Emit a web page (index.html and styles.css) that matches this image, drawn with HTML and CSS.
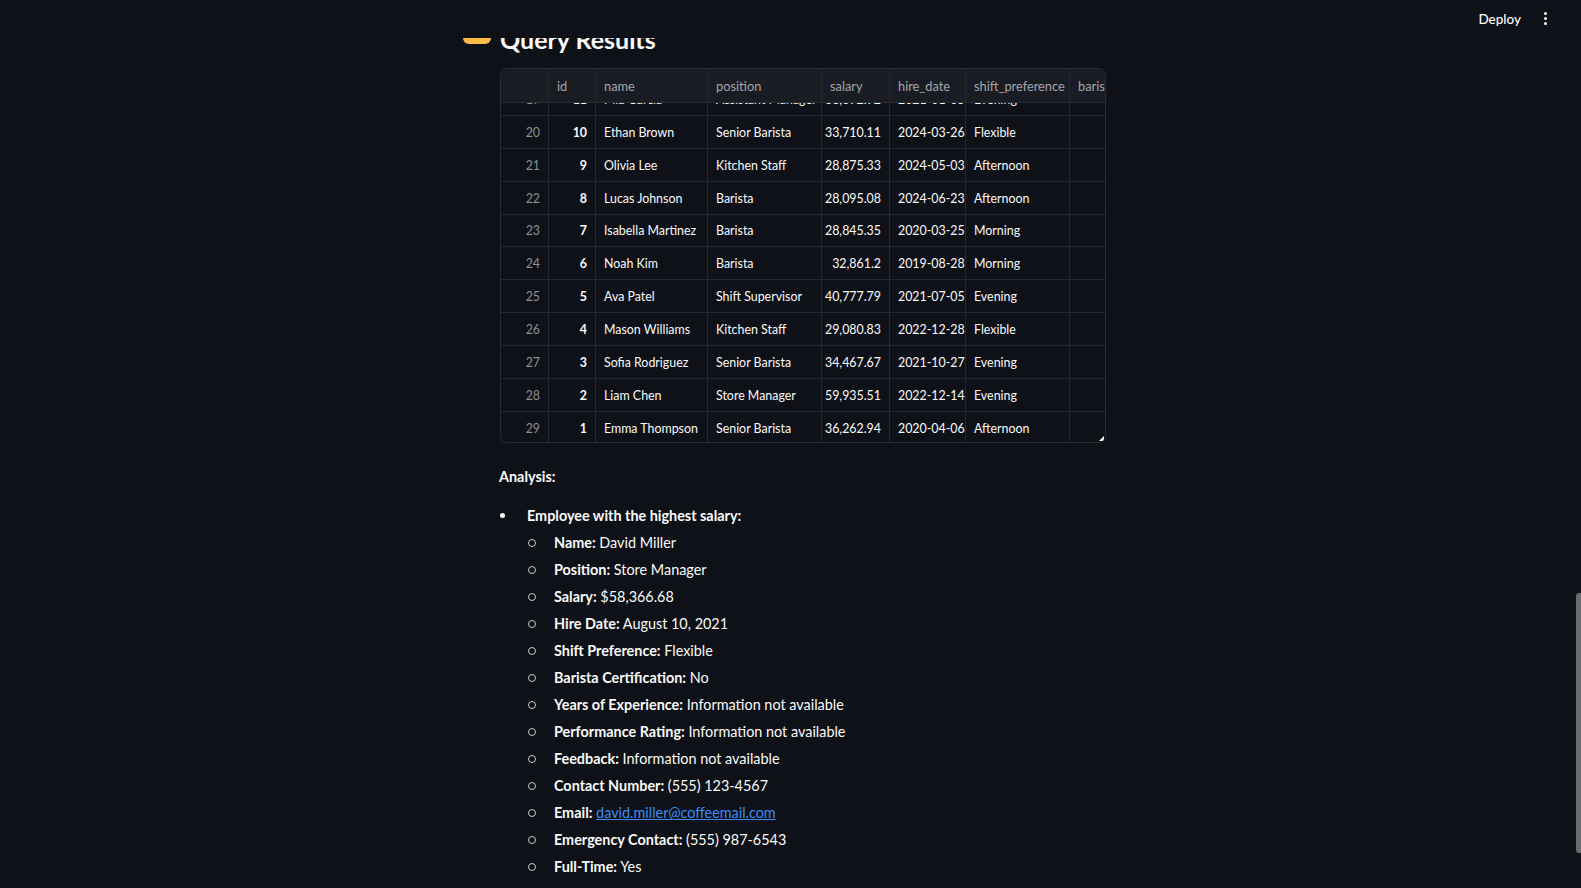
FILE: index.html
```html
<!DOCTYPE html>
<html lang="en">
<head>
<meta charset="utf-8">
<title>Query Results</title>
<link rel="stylesheet" href="styles.css">
</head>
<body>
<header class="topbar">
  <span class="deploy">Deploy</span>
  <span class="kebab"><i></i><i></i><i></i></span>
</header>

<main class="main">
  <section class="chat">
    <div class="avatar"></div>
    <div class="content">
      <h3 class="title">Query Results</h3>

      <div class="grid">
        <div class="row head">
          <div class="c idx"></div>
          <div class="c">id</div>
          <div class="c">name</div>
          <div class="c">position</div>
          <div class="c">salary</div>
          <div class="c">hire_date</div>
          <div class="c">shift_preference</div>
          <div class="c">barista_certification</div>
        </div>
        <div class="body">
          <div class="rows">
            <div class="row"><div class="c idx num">19</div><div class="c num b">11</div><div class="c">Mia Garcia</div><div class="c">Assistant Manager</div><div class="c num">38,092.92</div><div class="c">2021-01-05</div><div class="c">Evening</div><div class="c"></div></div>
            <div class="row"><div class="c idx num">20</div><div class="c num b">10</div><div class="c">Ethan Brown</div><div class="c">Senior Barista</div><div class="c num">33,710.11</div><div class="c">2024-03-26</div><div class="c">Flexible</div><div class="c"></div></div>
            <div class="row"><div class="c idx num">21</div><div class="c num b">9</div><div class="c">Olivia Lee</div><div class="c">Kitchen Staff</div><div class="c num">28,875.33</div><div class="c">2024-05-03</div><div class="c">Afternoon</div><div class="c"></div></div>
            <div class="row"><div class="c idx num">22</div><div class="c num b">8</div><div class="c">Lucas Johnson</div><div class="c">Barista</div><div class="c num">28,095.08</div><div class="c">2024-06-23</div><div class="c">Afternoon</div><div class="c"></div></div>
            <div class="row"><div class="c idx num">23</div><div class="c num b">7</div><div class="c">Isabella Martinez</div><div class="c">Barista</div><div class="c num">28,845.35</div><div class="c">2020-03-25</div><div class="c">Morning</div><div class="c"></div></div>
            <div class="row"><div class="c idx num">24</div><div class="c num b">6</div><div class="c">Noah Kim</div><div class="c">Barista</div><div class="c num">32,861.2</div><div class="c">2019-08-28</div><div class="c">Morning</div><div class="c"></div></div>
            <div class="row"><div class="c idx num">25</div><div class="c num b">5</div><div class="c">Ava Patel</div><div class="c">Shift Supervisor</div><div class="c num">40,777.79</div><div class="c">2021-07-05</div><div class="c">Evening</div><div class="c"></div></div>
            <div class="row"><div class="c idx num">26</div><div class="c num b">4</div><div class="c">Mason Williams</div><div class="c">Kitchen Staff</div><div class="c num">29,080.83</div><div class="c">2022-12-28</div><div class="c">Flexible</div><div class="c"></div></div>
            <div class="row"><div class="c idx num">27</div><div class="c num b">3</div><div class="c">Sofia Rodriguez</div><div class="c">Senior Barista</div><div class="c num">34,467.67</div><div class="c">2021-10-27</div><div class="c">Evening</div><div class="c"></div></div>
            <div class="row"><div class="c idx num">28</div><div class="c num b">2</div><div class="c">Liam Chen</div><div class="c">Store Manager</div><div class="c num">59,935.51</div><div class="c">2022-12-14</div><div class="c">Evening</div><div class="c"></div></div>
            <div class="row"><div class="c idx num">29</div><div class="c num b">1</div><div class="c">Emma Thompson</div><div class="c">Senior Barista</div><div class="c num">36,262.94</div><div class="c">2020-04-06</div><div class="c">Afternoon</div><div class="c"></div></div>
          </div>
        </div>
        <span class="resize"></span>
      </div>

      <p class="para"><strong>Analysis:</strong></p>
      <ul class="list">
        <li><strong>Employee with the highest salary:</strong>
          <ul class="sublist">
            <li><strong>Name:</strong> David Miller</li>
            <li><strong>Position:</strong> Store Manager</li>
            <li><strong>Salary:</strong> $58,366.68</li>
            <li><strong>Hire Date:</strong> August 10, 2021</li>
            <li><strong>Shift Preference:</strong> Flexible</li>
            <li><strong>Barista Certification:</strong> No</li>
            <li><strong>Years of Experience:</strong> Information not available</li>
            <li><strong>Performance Rating:</strong> Information not available</li>
            <li><strong>Feedback:</strong> Information not available</li>
            <li><strong>Contact Number:</strong> (555) 123-4567</li>
            <li><strong>Email:</strong> <a href="#">david.miller@coffeemail.com</a></li>
            <li><strong>Emergency Contact:</strong> (555) 987-6543</li>
            <li><strong>Full-Time:</strong> Yes</li>
          </ul>
        </li>
      </ul>
    </div>
  </section>
</main>

<div class="scrollthumb"></div>
</body>
</html>
```

FILE: styles.css
```css
* { box-sizing: border-box; }

html, body {
  margin: 0;
  padding: 0;
  height: 888px;
  overflow: hidden;
  background: #0e1117;
  color: #fafafa;
  font-family: "Lato", "Noto Sans", sans-serif;
}

.topbar {
  position: fixed;
  top: 0;
  left: 0;
  right: 0;
  height: 38px;
  padding-bottom: 1px;
  background: #0e1117;
  z-index: 10;
  display: flex;
  align-items: center;
  justify-content: flex-end;
  padding-right: 33px;
  gap: 23px;
}

.deploy {
  font-size: 13.5px;
  font-weight: 500;
  color: #fafafa;
}

.kebab {
  display: flex;
  flex-direction: column;
  gap: 2px;
  width: 4px;
}

.kebab i {
  display: block;
  width: 3px;
  height: 3px;
  border-radius: 50%;
  background: #fafafa;
}

.main {
  padding-left: 463px;
  padding-top: 16px;
}

.chat {
  display: flex;
  align-items: flex-start;
  gap: 9px;
}

.avatar {
  width: 28px;
  height: 28px;
  border-radius: 6px;
  background: #ffbd45;
  flex: none;
}

.content {
  width: 606px;
}

.title {
  margin: 7px 0 13px;
  font-size: 25px;
  line-height: 32px;
  font-weight: 700;
}

.grid {
  position: relative;
  width: 606px;
  height: 375px;
  border: 1px solid #2a2c33;
  border-radius: 7px;
  overflow: hidden;
  font-size: 12.4px;
}

.row {
  display: grid;
  grid-template-columns: 48px 47px 112px 114px 68px 76px 104px 140px;
  height: 32.85px;
}

.row .c {
  border-right: 1px solid #25272e;
  border-bottom: 1px solid #25272e;
  padding: 1px 8px 0;
  display: flex;
  align-items: center;
  white-space: nowrap;
  overflow: hidden;
}

.row.head {
  height: 34px;
  background: #1a1c24;
  color: #a3a5ab;
  font-size: 12.8px;
}

.row.head .c {
  border-bottom-color: #2c2e35;
}

.body {
  height: 339px;
  overflow: hidden;
}

.rows {
  margin-top: -19.85px;
}

.c.num { justify-content: flex-end; }
.c.idx { color: #8c8f96; }
.c.b { font-weight: 700; }

.resize {
  position: absolute;
  right: 1px;
  bottom: 1px;
  width: 0;
  height: 0;
  border-left: 5px solid transparent;
  border-bottom: 5px solid #fafafa;
}

.para {
  margin: 20px 0 12px -1px;
  font-size: 14.4px;
  line-height: 27px;
}

.list {
  margin: 0;
  padding-left: 27px;
  font-size: 14.4px;
  line-height: 27px;
  list-style: none;
}

.list > li {
  position: relative;
}

.list > li::before {
  content: "";
  position: absolute;
  left: -27px;
  top: 11px;
  width: 5px;
  height: 5px;
  border-radius: 50%;
  background: #fafafa;
}

.sublist {
  margin: 0;
  padding-left: 27px;
  list-style: none;
}

.sublist > li {
  position: relative;
}

.sublist > li::before {
  content: "";
  position: absolute;
  left: -26px;
  top: 10px;
  width: 6px;
  height: 6px;
  border-radius: 50%;
  border: 1px solid #c9cacd;
}

a {
  color: #3d8bf5;
  text-decoration: underline;
}

.scrollthumb {
  position: fixed;
  right: 0;
  top: 593px;
  width: 5px;
  height: 260px;
  border-radius: 3px 0 0 3px;
  background: #6b6c70;
}
```
